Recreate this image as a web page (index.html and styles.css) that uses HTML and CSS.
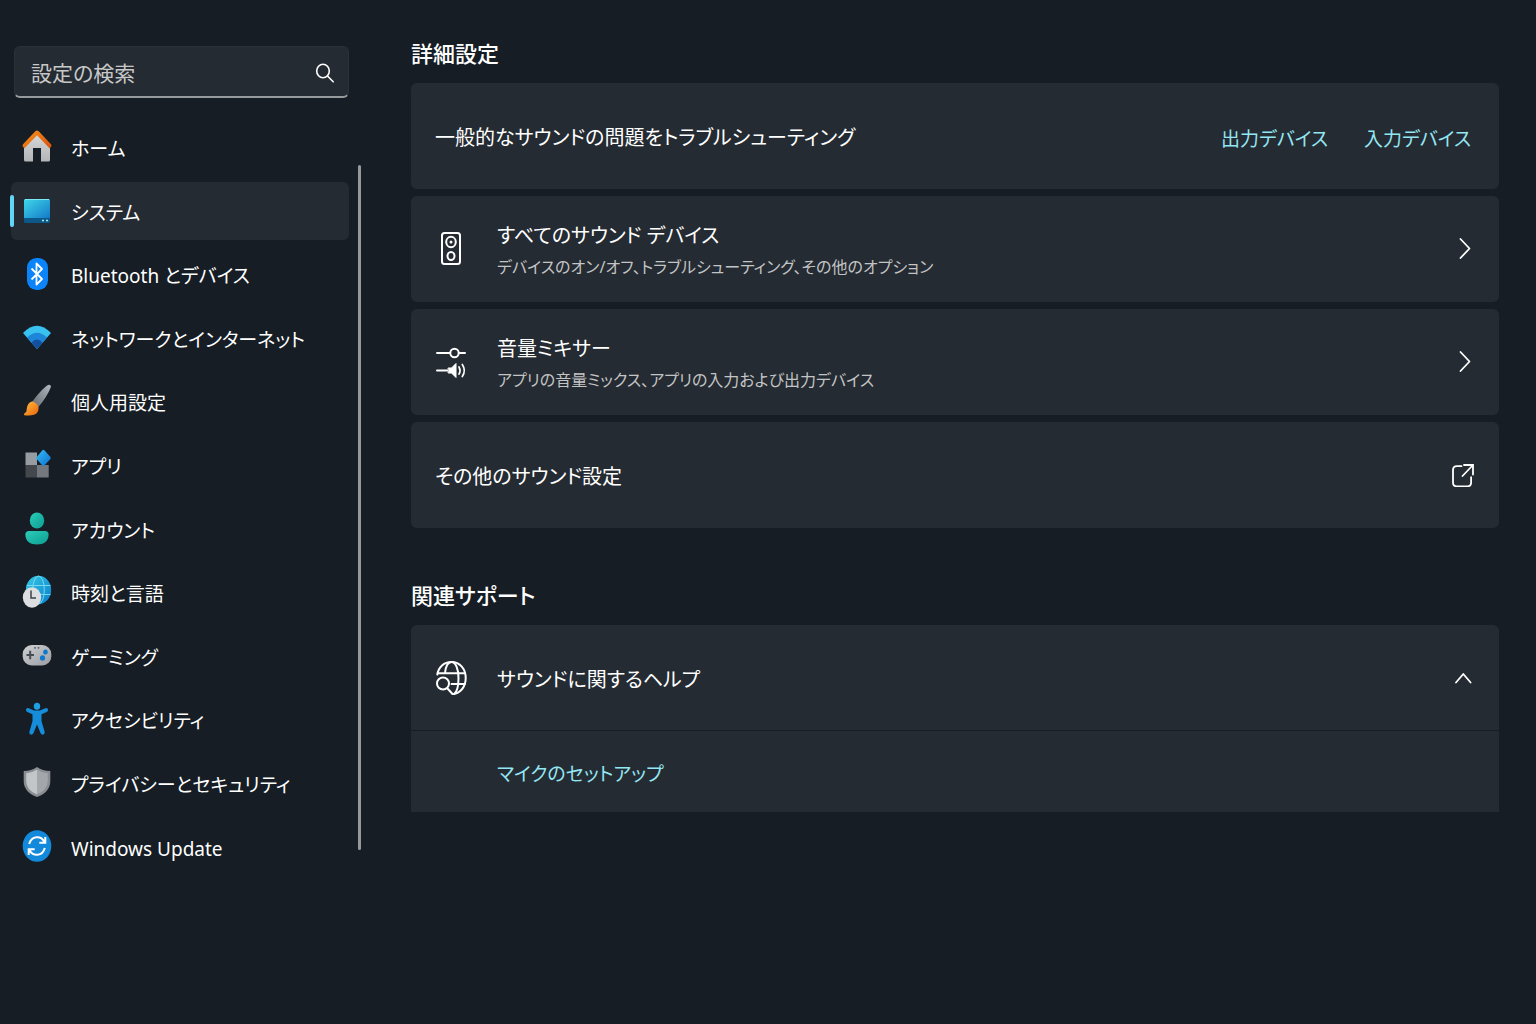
FILE: index.html
```html
<!DOCTYPE html>
<html lang="ja">
<head>
    <meta charset="UTF-8">
    <meta name="viewport" content="width=device-width, initial-scale=1.0">
    <title>設定</title>
    <link rel="stylesheet" href="styles.css">
</head>
<body>
    <aside class="sidebar">
        <form class="search" role="search">
            <input type="search" placeholder="設定の検索" aria-label="設定の検索">
            <button type="submit" aria-label="検索">
                <svg width="20" height="20" viewBox="0 0 20 20" fill="none" stroke="#fff" stroke-width="1.6" stroke-linecap="round"><ellipse cx="8" cy="8" rx="6.3" ry="6.8"/><path d="M12.5 13l5.7 5.8"/></svg>
            </button>
        </form>

        <div class="nav-area">
            <nav class="nav">
                <a href="#">
                    <svg viewBox="0 0 32 32">
                        <defs><linearGradient id="wall" x1="0" y1="0" x2="0" y2="1"><stop offset="0" stop-color="#d9dadb"/><stop offset="1" stop-color="#b3b4b6"/></linearGradient>
                        <linearGradient id="roof" x1="0" y1="0" x2="1" y2="1"><stop offset="0" stop-color="#f7941d"/><stop offset="1" stop-color="#d9500b"/></linearGradient></defs>
                        <path d="M3 14L16 1l13 13v15a1.5 1.5 0 0 1-1.5 1.5H20V17h-8v13.5H4.5A1.5 1.5 0 0 1 3 29z" fill="url(#wall)"/>
                        <path d="M14.3.3Q16-1.3 17.7.3L30 13.3q1 1.3 0 2.7l-1.5 1.2L16 4.2 3.5 17.2 2 16q-1-1.4 0-2.7z" fill="url(#roof)"/>
                    </svg>
                    <span>ホーム</span>
                </a>
                <a href="#" class="active" aria-current="page">
                    <svg viewBox="0 0 32 32">
                        <defs><linearGradient id="screen" x1="0" y1="0" x2="1" y2="1"><stop offset="0" stop-color="#3fd9e8"/><stop offset="1" stop-color="#1479c9"/></linearGradient></defs>
                        <rect x="3" y="4" width="26" height="24" rx="1.5" fill="#0c5888"/>
                        <path d="M4.5 4h23A1.5 1.5 0 0 1 29 5.5V23H3V5.5A1.5 1.5 0 0 1 4.5 4z" fill="url(#screen)"/>
                        <path d="M4 4.5h24" stroke="#7ceaf2"/>
                        <path d="M21 25.5h2M25 25.5h2" stroke="#9fe9f7" stroke-width="1.6"/>
                    </svg>
                    <span>システム</span>
                </a>
                <a href="#">
                    <svg viewBox="0 0 32 32">
                        <rect x="6" y="0" width="21" height="32" rx="9.5" fill="#0a84f8"/>
                        <path d="M10.5 10.5L21 21l-5.5 5.5v-21L21 11 10.5 21.5" fill="none" stroke="#fff" stroke-width="1.8" stroke-linejoin="round"/>
                    </svg>
                    <span>Bluetooth とデバイス</span>
                </a>
                <a href="#">
                    <svg viewBox="0 0 32 32">
                        <path d="M2 11Q16-3.5 30 11L16 27z" fill="#39c1f0"/>
                        <path d="M6 15.5q10-9.5 20 0L16 27z" fill="#1d86d8"/>
                        <path d="M10.5 20.5q5.5-6 11 0L16 27z" fill="#1450a0"/>
                    </svg>
                    <span>ネットワークとインターネット</span>
                </a>
                <a href="#">
                    <svg viewBox="0 0 32 32">
                        <defs><linearGradient id="handle" x1="0" y1="1" x2="1" y2="0"><stop offset="0" stop-color="#60686f"/><stop offset="1" stop-color="#b4b9be"/></linearGradient>
                        <linearGradient id="tip" x1="0" y1="0" x2="1" y2="1"><stop offset="0" stop-color="#ffbc42"/><stop offset="1" stop-color="#e9650a"/></linearGradient></defs>
                        <path d="M11 17Q19 6 26 .5q3.5-1.8 4 1.2Q26 12 17 22.5z" fill="url(#handle)"/>
                        <path d="M11 16.5q4.5.5 6.5 5.5.5 6-4.5 7.8-4 1.2-9.8.4-.5-1.2.5-2.2 2-.5 2-4 1-7 5.3-7.5z" fill="url(#tip)"/>
                    </svg>
                    <span>個人用設定</span>
                </a>
                <a href="#">
                    <svg viewBox="0 0 32 32">
                        <defs><linearGradient id="tile" x1="0" y1="0" x2="1" y2="1"><stop offset="0" stop-color="#37bdf3"/><stop offset="1" stop-color="#0b6ed0"/></linearGradient></defs>
                        <rect x="4.5" y="3.5" width="11.5" height="12.5" fill="#979ca3"/>
                        <rect x="4.5" y="16" width="11.5" height="12.5" fill="#44484d"/>
                        <rect x="16" y="16" width="11.7" height="12.5" fill="#73777e"/>
                        <path d="M21.4 1.2q1-1 2 0l6 6.9q.7 1 0 2l-6 6.5q-1 .8-2 0l-5.7-6.5q-.7-1 0-2z" fill="url(#tile)"/>
                    </svg>
                    <span>アプリ</span>
                </a>
                <a href="#">
                    <svg viewBox="0 0 32 32">
                        <defs><linearGradient id="person" x1="0" y1="0" x2="1" y2="1"><stop offset="0" stop-color="#2ccdb8"/><stop offset="1" stop-color="#0c9d92"/></linearGradient></defs>
                        <ellipse cx="16" cy="7.5" rx="7.2" ry="8" fill="url(#person)"/>
                        <path d="M8 18h16q3.6 0 3.6 3.5c0 7-5 10-11.6 10s-11.6-3-11.6-10Q4.4 18 8 18z" fill="url(#person)"/>
                    </svg>
                    <span>アカウント</span>
                </a>
                <a href="#">
                    <svg viewBox="0 0 32 32">
                        <defs><linearGradient id="globe" x1="0" y1="0" x2="1" y2="1"><stop offset="0" stop-color="#38cbe6"/><stop offset="1" stop-color="#087cc9"/></linearGradient></defs>
                        <ellipse cx="17.5" cy="14" rx="12.7" ry="14.2" fill="url(#globe)"/>
                        <g fill="none" stroke="#7fdcf4" stroke-width=".9"><ellipse cx="17.5" cy="14" rx="5.8" ry="14"/><path d="M6 9.5h23.5M6 18.5h23.5"/></g>
                        <ellipse cx="11" cy="21.5" rx="9.2" ry="10.2" fill="#dcdedf"/>
                        <path d="M10 14.5V22h5" fill="none" stroke="#3d4349" stroke-width="1.5"/>
                    </svg>
                    <span>時刻と言語</span>
                </a>
                <a href="#">
                    <svg viewBox="0 0 32 32">
                        <defs><linearGradient id="pad" x1="0" y1="0" x2="1" y2="1"><stop offset="0" stop-color="#cfd1d4"/><stop offset="1" stop-color="#9a9da2"/></linearGradient></defs>
                        <rect x="1.7" y="5" width="28.6" height="20.5" rx="9" fill="url(#pad)"/>
                        <path d="M5.5 15H13M9.2 10.7v8.6" stroke="#474d54" stroke-width="2"/>
                        <ellipse cx="24.5" cy="12" rx="2.3" ry="2.6" fill="#0d79cc"/><ellipse cx="21.5" cy="18" rx="2.6" ry="2.8" fill="#0d79cc"/>
                        <circle cx="14" cy="7.8" r=".9" fill="#4c5258"/><circle cx="17.5" cy="7.8" r=".9" fill="#4c5258"/>
                    </svg>
                    <span>ゲーミング</span>
                </a>
                <a href="#">
                    <svg viewBox="0 0 32 32">
                        <ellipse cx="16" cy="3.2" rx="3.2" ry="3.5" fill="#1da0e4"/>
                        <path d="M5 6.5q.8-2 2.8-1.3L13 7.5h6l5.2-2.3q2-.7 2.8 1.3.4 1.5-1.3 2.5l-5.2 2.2v7L23.7 29q.2 2-1.4 2.6-1.8.3-2.7-1.4L16 21.5l-3.6 8.7q-.9 1.7-2.7 1.4Q8.1 31 8.3 29l3.2-10.8v-7L6.3 9Q4.6 8 5 6.500z" fill="#168ddb"/>
                    </svg>
                    <span>アクセシビリティ</span>
                </a>
                <a href="#">
                    <svg viewBox="0 0 32 32">
                        <path d="M16 0q5.5 4 13.3 4v10q0 11-13.3 16Q2.7 25 2.7 14V4Q10.5 4 16 0z" fill="#8a8d92"/>
                        <path d="M16 2.5Q11 6 5.2 6.2V14q0 9 10.8 13.5z" fill="#c3c6c9"/>
                        <path d="M16 2.5q5 3.5 10.8 3.7V14q0 9-10.8 13.5z" fill="#a3a6ab"/>
                    </svg>
                    <span>プライバシーとセキュリティ</span>
                </a>
                <a href="#">
                    <svg viewBox="0 0 32 32">
                        <ellipse cx="16" cy="15" rx="14.3" ry="15.8" fill="#1389dc"/>
                        <g fill="none" stroke="#fff" stroke-width="2"><path d="M8.2 13C10.5 4.5 20 4 23.5 11M24.3 6v5.8h-6M23.8 17C21.5 25.5 12 26 8.5 19M7.7 24v-5.8h6"/></g>
                    </svg>
                    <span>Windows Update</span>
                </a>
            </nav>
            <div class="scrollbar"></div>
        </div>
    </aside>

    <main class="content">
        <section>
            <h2>詳細設定</h2>
            <div class="cards">
                <div class="card">
                    <span class="title">一般的なサウンドの問題をトラブルシューティング</span>
                    <div class="links">
                        <a href="#">出力デバイス</a>
                        <a href="#">入力デバイス</a>
                    </div>
                </div>
                <button type="button" class="card">
                    <svg class="icon" viewBox="2 1 34 34" fill="none" stroke="#fff" stroke-width="2">
                        <rect x="9" y="2" width="18" height="31" rx="2.5"/>
                        <ellipse cx="18" cy="11" rx="4.8" ry="5.2"/><circle cx="18" cy="11" r="1.5" fill="#fff" stroke="none"/>
                        <ellipse cx="18" cy="25" rx="3.5" ry="4"/>
                    </svg>
                    <span class="text">
                        <span class="title">すべてのサウンド デバイス</span>
                        <span class="desc">デバイスのオン/オフ、トラブルシューティング、その他のオプション</span>
                    </span>
                    <svg class="action" viewBox="0 0 24 24" fill="none" stroke="#fff" stroke-width="1.8" stroke-linecap="round" stroke-linejoin="round"><path d="M9.5 2l9 9.500-9 9.500"/></svg>
                </button>
                <button type="button" class="card">
                    <svg class="icon" viewBox="2 1 34 34" fill="none" stroke="#fff" stroke-width="2" stroke-linecap="round">
                        <path d="M4 9h13M26 9h6M4 26.5h10"/><circle cx="21.5" cy="9" r="4.2"/>
                        <path d="M15.5 24h3l4.5-4.5v14L18.5 29h-3z" fill="#fff" stroke-width="1"/>
                        <path d="M26 22.8q2 3.7 0 7.4M29.3 20.5q4 6 0 12" stroke-width="1.7"/>
                    </svg>
                    <span class="text">
                        <span class="title">音量ミキサー</span>
                        <span class="desc">アプリの音量ミックス、アプリの入力および出力デバイス</span>
                    </span>
                    <svg class="action" viewBox="0 0 24 24" fill="none" stroke="#fff" stroke-width="1.8" stroke-linecap="round" stroke-linejoin="round"><path d="M9.5 2l9 9.5-9 9.5"/></svg>
                </button>
                <button type="button" class="card">
                    <span class="title">その他のサウンド設定</span>
                    <svg class="action" viewBox="0 0 24 24" fill="none" stroke="#fff" stroke-width="1.8" stroke-linecap="round"><path d="M10.5 3.2H5.8Q2 3.2 2 7v12.5q0 3.8 3.8 3.8h10.5q3.8 0 3.8-3.8v-5.3M13 2h9v9.5M21.5 2.5L11.5 13"/></svg>
                </button>
            </div>
        </section>

        <section>
            <h2>関連サポート</h2>
            <div class="expander">
                <button type="button" class="card" aria-expanded="true" aria-controls="help-body">
                    <svg class="icon" viewBox="2 1 34 34" fill="none" stroke="#fff" stroke-width="2" stroke-linecap="round">
                        <path d="M4.3 14.5C5.5 7 11 2 18.5 2c8.5 0 14.2 7 14.2 16 0 8.2-4.7 14.7-11.7 16"/>
                        <path d="M5 13.3h27M18.5 24H32M12 13c.8-7 3.2-11 6.5-11 4.2 0 7 7 7 16 0 8-1.5 14-4.5 16"/>
                        <circle cx="10" cy="23.5" r="6"/><path d="M14.5 28.5l5 5.5"/>
                    </svg>
                    <span class="title">サウンドに関するヘルプ</span>
                    <svg class="action" viewBox="0 0 24 24" fill="none" stroke="#fff" stroke-width="1.8" stroke-linecap="round" stroke-linejoin="round"><path d="M5 16.5L12.3 8l7.3 8.5"/></svg>
                </button>
                <div class="expander-body" id="help-body">
                    <a href="#">マイクのセットアップ</a>
                </div>
            </div>
        </section>
    </main>
</body>
</html>
```

FILE: styles.css
```css
* {
    box-sizing: border-box;
}

body {
    margin: 0;
    min-height: 100vh;
    display: flex;
    gap: 50px;
    padding-right: 37px;
    background: #161d24;
    color: #fff;
    font-family: "Noto Sans", "Noto Sans CJK JP", sans-serif;
    font-size: 20px;
    line-height: 32px;
    font-feature-settings: "palt";
}

a {
    color: #93e6f2;
    text-decoration: none;
}

button, input {
    font: inherit;
    font-feature-settings: inherit;
    color: inherit;
    background: none;
    border: none;
    padding: 0;
}

/* Sidebar */
.sidebar {
    flex: none;
    width: 361px;
    padding-top: 46px;
}

.search {
    display: flex;
    align-items: center;
    height: 52px;
    margin: 0 12px 20px 14px;
    padding: 2px 13px 0 16px;
    background: #252b32;
    border: 1px solid #2b3138;
    border-bottom: 2px solid #989b9e;
    border-radius: 6px;
}

.search input {
    flex: 1;
    min-width: 0;
    outline: none;
    font-size: 21px;
}

.search input::placeholder {
    color: #c8c8c8;
    opacity: 1;
}

.search button {
    display: flex;
}

.nav-area {
    display: flex;
    gap: 9px;
    padding-left: 11px;
}

.nav {
    flex: 1;
    min-width: 0;
    min-height: 74vh;
    display: flex;
    flex-direction: column;
    justify-content: space-between;
}

.nav a {
    position: relative;
    display: flex;
    align-items: center;
    gap: 18px;
    height: 58px;
    padding-left: 10px;
    border-radius: 6px;
    color: #fff;
    font-size: 19px;
    white-space: nowrap;
}

.nav span {
    padding-top: 4px;
}

.nav svg {
    flex: none;
    width: 32px;
    height: 32px;
    overflow: visible;
}

.nav .active, .nav a:hover {
    background: #252b32;
}

.nav .active::before {
    content: '';
    position: absolute;
    left: -1px;
    top: 13px;
    width: 4px;
    height: 32px;
    border-radius: 2px;
    background: #63d6f8;
}

.scrollbar {
    flex: none;
    width: 3px;
    margin: 47px 0 26px;
    border-radius: 2px;
    background: #96999c;
}

/* Content */
.content {
    flex: 1;
    min-width: 0;
    padding-top: 37px;
}

h2 {
    margin: 0 0 14px;
    font-size: 22px;
    line-height: 32px;
    font-weight: 500;
}

section + section {
    margin-top: 51px;
}

.cards {
    display: flex;
    flex-direction: column;
    gap: 7px;
}

.card {
    width: 100%;
    min-height: 106px;
    display: flex;
    align-items: center;
    gap: 28px;
    padding: 0 24px;
    border-radius: 6px;
    background: #252b32;
    text-align: left;
}

.icon {
    flex: none;
    width: 34px;
    height: 34px;
    overflow: visible;
}

.action {
    flex: none;
    width: 24px;
    height: 24px;
    margin-left: auto;
}

.title {
    padding-top: 4px;
}

.text {
    display: flex;
    flex-direction: column;
}

.desc {
    font-size: 16px;
    line-height: 30px;
    color: #c3c4c5;
}

.links {
    display: flex;
    gap: 36px;
    margin-left: auto;
    padding: 6px 4px 0 0;
}

.links a, .expander-body a {
    font-size: 19px;
}

.expander .card {
    border-radius: 6px 6px 0 0;
    border-bottom: 1px solid #161d24;
}

.expander-body {
    display: flex;
    align-items: center;
    min-height: 81px;
    padding: 4px 86px 0;
    background: #252b32;
}
```
